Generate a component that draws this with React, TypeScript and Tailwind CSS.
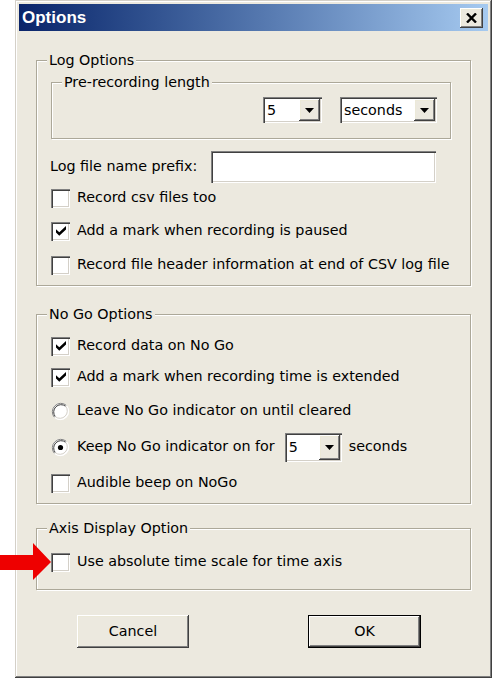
import React from 'react';

const SUNKEN =
  'shadow-[inset_1px_1px_0_#808080,inset_2px_2px_0_#404040,inset_-1px_-1px_0_#ffffff,inset_-2px_-2px_0_#d4d0c8]';
const RAISED =
  'shadow-[inset_-1px_-1px_0_#404040,inset_1px_1px_0_#ffffff,inset_-2px_-2px_0_#808080,inset_2px_2px_0_#ece9d8]';

function CheckBox({ checked }: { checked?: boolean }) {
  return (
    <span className={`w-[19px] h-[19px] shrink-0 bg-white flex items-center justify-center ${SUNKEN}`}>
      {checked && (
        <svg width="10" height="10" viewBox="0 0 7 7">
          <path d="M0 2.2 L2.3 4.3 L7 0 L7 2.4 L2.3 6.8 L0 4.6 Z" fill="#000" />
        </svg>
      )}
    </span>
  );
}

function Radio({ checked }: { checked?: boolean }) {
  return (
    <svg width="19" height="19" viewBox="0 0 19 19" className="shrink-0">
      <circle cx="9.5" cy="9.5" r="8.5" fill="#fff" />
      <path d="M3.5 15.5 A8.5 8.5 0 0 1 15.5 3.5" fill="none" stroke="#808080" strokeWidth="1" />
      <path d="M15.5 3.5 A8.5 8.5 0 0 1 3.5 15.5" fill="none" stroke="#ffffff" strokeWidth="1" />
      <path d="M4.3 14.7 A7.4 7.4 0 0 1 14.7 4.3" fill="none" stroke="#404040" strokeWidth="1" />
      <path d="M14.7 4.3 A7.4 7.4 0 0 1 4.3 14.7" fill="none" stroke="#d4d0c8" strokeWidth="1" />
      {checked && <circle cx="9.5" cy="9.5" r="2.6" fill="#000" />}
    </svg>
  );
}

function Combo({ value, className }: { value: string; className: string }) {
  return (
    <div className={`flex bg-white p-[2px] ${SUNKEN} ${className}`}>
      <span className="flex-1 flex items-center pl-[2px] leading-none">{value}</span>
      <span className={`w-[21px] bg-[#ece9df] flex items-center justify-center ${RAISED}`}>
        <svg width="9" height="5" viewBox="0 0 9 5">
          <path d="M0 0 H9 L4.5 5 Z" fill="#000" />
        </svg>
      </span>
    </div>
  );
}

function GroupBox({ title, className, children }: { title: string; className: string; children?: React.ReactNode }) {
  return (
    <div className={`relative shrink-0 border border-[#aca899] shadow-[1px_1px_0_#ffffff,inset_1px_1px_0_#ffffff] ${className}`}>
      <span className="absolute left-[10px] top-[-10px] px-[2px] bg-[#ece9df] leading-[18px]">{title}</span>
      {children}
    </div>
  );
}

function Row({ className, children }: { className: string; children: React.ReactNode }) {
  return <div className={`flex items-center gap-[7px] ${className}`}>{children}</div>;
}

export default function App() {
  return (
    <div className="relative w-[492px] h-[678px] bg-white pl-[15px] font-['DejaVu_Sans',Verdana,sans-serif] text-[14.3px] text-black">
      <div className="w-[477px] h-[678px] bg-[#ece9df] p-[4px] flex flex-col shadow-[inset_-1px_-1px_0_#404040,inset_1px_1px_0_#d4d0c8,inset_-2px_-2px_0_#808080,inset_2px_2px_0_#ffffff]">
        {/* title bar */}
        <div className="h-[27px] shrink-0 flex items-center justify-between bg-gradient-to-r from-[#0a246a] to-[#a6caf0] pl-[3px] pr-[5px]">
          <span className="text-white font-bold text-[17px] leading-none font-['Liberation_Sans',Arial,sans-serif]">Options</span>
          <span className={`w-[23px] h-[20px] bg-[#ece9df] flex items-center justify-center ${RAISED}`}>
            <svg width="11" height="10" viewBox="0 0 11 10">
              <path d="M1 0.5 L10 9.5 M10 0.5 L1 9.5" stroke="#000" strokeWidth="2.4" />
            </svg>
          </span>
        </div>

        <div className="flex flex-col pl-[17px]">
          <GroupBox title="Log Options" className="mt-[29px] w-[435px] h-[226px]">
            <div className="flex flex-col pl-[14px]">
              <GroupBox title="Pre-recording length" className="mt-[21px] w-[400px] h-[57px]">
                <div className="flex justify-end gap-[18px] pr-[13px] pt-[14px]">
                  <Combo value="5" className="w-[59px] h-[26px]" />
                  <Combo value="seconds" className="w-[97px] h-[26px]" />
                </div>
              </GroupBox>
              <div className="mt-[12px] h-[32px] flex items-center">
                <span className="w-[161px] -ml-[1px]">Log file name prefix:</span>
                <div className={`w-[225px] h-[32px] bg-white ${SUNKEN}`} />
              </div>
              <Row className="mt-[5px] h-[20px]">
                <CheckBox />
                <span>Record csv files too</span>
              </Row>
              <Row className="mt-[13px] h-[20px]">
                <CheckBox checked />
                <span>Add a mark when recording is paused</span>
              </Row>
              <Row className="mt-[14px] h-[20px]">
                <CheckBox />
                <span>Record file header information at end of CSV log file</span>
              </Row>
            </div>
          </GroupBox>

          <GroupBox title="No Go Options" className="mt-[28px] w-[435px] h-[190px]">
            <div className="flex flex-col pl-[14px]">
              <Row className="mt-[21px] h-[20px]">
                <CheckBox checked />
                <span>Record data on No Go</span>
              </Row>
              <Row className="mt-[11px] h-[20px]">
                <CheckBox checked />
                <span>Add a mark when recording time is extended</span>
              </Row>
              <Row className="mt-[14px] h-[20px]">
                <Radio />
                <span>Leave No Go indicator on until cleared</span>
              </Row>
              <Row className="mt-[11px] h-[30px]">
                <Radio checked />
                <span>Keep No Go indicator on for</span>
                <Combo value="5" className="ml-[3px] w-[57px] h-[29px]" />
                <span>seconds</span>
              </Row>
              <Row className="mt-[11px] h-[20px]">
                <CheckBox />
                <span>Audible beep on NoGo</span>
              </Row>
            </div>
          </GroupBox>

          <GroupBox title="Axis Display Option" className="mt-[24px] w-[435px] h-[62px]">
            <div className="flex flex-col pl-[14px]">
              <Row className="mt-[23px] h-[20px]">
                <CheckBox />
                <span>Use absolute time scale for time axis</span>
              </Row>
            </div>
          </GroupBox>

          <div className="mt-[25px] flex">
            <button className={`ml-[41px] w-[112px] h-[33px] bg-[#ece9df] ${RAISED}`}>Cancel</button>
            <button className="ml-[119px] w-[113px] h-[33px] border border-black bg-[#ece9df] shadow-[inset_-1px_-1px_0_#404040,inset_1px_1px_0_#ffffff,inset_-2px_-2px_0_#808080]">
              OK
            </button>
          </div>
        </div>
      </div>

      {/* red pointer arrow */}
      <svg className="absolute left-0 top-[540px]" width="52" height="42" viewBox="0 0 52 42">
        <path d="M0 15 H33 V3 L51 22 L33 40 V30 H0 Z" fill="#ee0000" />
      </svg>
    </div>
  );
}
